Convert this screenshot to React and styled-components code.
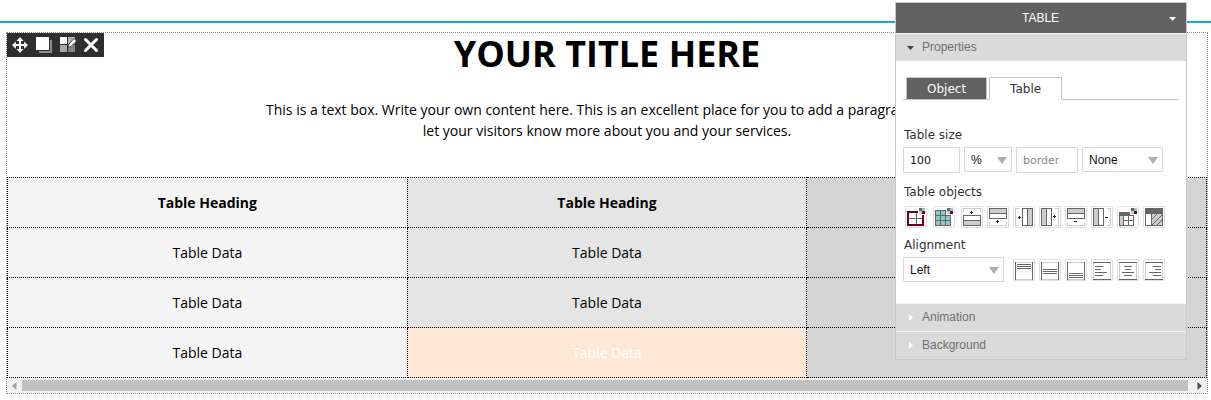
import React, { useState } from "react";
import styled, { createGlobalStyle } from "styled-components";

const GlobalStyle = createGlobalStyle`
  * {
    box-sizing: border-box;
  }
  body {
    margin: 0;
    background-color: #fff;
    color: #000;
    font-family: "Open Sans", sans-serif;
    font-size: 14px;
  }
`;

/* ---------- canvas ---------- */

const Page = styled.div`
  position: relative;
  padding: 21px 0 6px;
`;

const Guide = styled.div`
  height: 2px;
  background-color: #00b1e1;
`;

const Frame = styled.main`
  position: relative;
  margin: 9px 3px 0 6px;
  border: 1px dotted #8c8c8c;
`;

const Intro = styled.section`
  height: 144px;
  text-align: center;
`;

const Title = styled.h1`
  margin: 0;
  font-size: 36px;
  font-weight: 700;
  line-height: 42px;
`;

const Lead = styled.p`
  max-width: 690px;
  margin: 24px auto 0;
  line-height: 21px;
`;

const DataTable = styled.table`
  width: 100%;
  table-layout: fixed;
  border-collapse: collapse;
  text-align: center;
`;

const cellColors = ["#f5f5f5", "#e5e5e5", "#d4d4d4"];

const Cell = styled.td`
  height: 50px;
  padding: 0;
  border: 1px dotted #000;
  background-color: ${(props) =>
    props.$active ? "#ffe8d6" : cellColors[props.$col]};
  color: ${(props) => (props.$active ? "#fff" : "#000")};
  font-weight: ${(props) => (props.$heading ? 700 : 400)};
`;

const ScrollBar = styled.div`
  display: flex;
  height: 15px;
  background-color: #f1f1f1;
`;

const ScrollButton = styled.button`
  display: flex;
  align-items: center;
  justify-content: center;
  width: 15px;
  padding: 0;
  border: 0;
  background: none;
  color: ${(props) => (props.$off ? "#a3a3a3" : "#505050")};
`;

const Track = styled.div`
  flex: 1;
  padding: 2px 4px 2px 0;
`;

const Thumb = styled.div`
  height: 11px;
  background-color: #c1c1c1;
`;

/* ---------- object toolbar ---------- */

const Toolbar = styled.div`
  position: absolute;
  top: 0;
  left: 0;
  display: flex;
  padding-right: 1px;
  background-color: #2f2f2f;
`;

const ToolbarButton = styled.button`
  width: 24px;
  height: 24px;
  padding: 0;
  border: 0;
  background: none;

  svg {
    display: block;
  }
`;

/* ---------- inspector ---------- */

const Panel = styled.aside`
  position: absolute;
  top: 2px;
  right: 24px;
  width: 292px;
  border: 1px solid #c8c8c8;
  background-color: #fff;
  color: #333;
  font-family: "DejaVu Sans", sans-serif;
  font-size: 12px;
`;

const PanelHeader = styled.button`
  display: flex;
  align-items: center;
  width: 100%;
  height: 30px;
  padding: 0 9px;
  border: 0;
  background-color: #616161;
  color: #fff;
  font: 12px "Liberation Sans", Arial, sans-serif;

  span {
    flex: 1;
    padding-left: 8px;
  }
`;

const SectionHeader = styled.button`
  display: flex;
  align-items: center;
  gap: 7px;
  width: 100%;
  height: 28px;
  padding: 0 10px 1px;
  border: 0;
  border-top: 1px solid #f4f4f4;
  background-color: #dadada;
  color: #707070;
  font: 12px "Liberation Sans", Arial, sans-serif;
`;

const PanelBody = styled.div`
  padding: 16px 7px 19px;
`;

const Tabs = styled.div`
  display: flex;
  gap: 2px;
  padding: 0 3px;
  border-bottom: 1px solid #c8c8c8;
`;

const Tab = styled.button`
  height: 23px;
  margin-bottom: -1px;
  padding: 0 20px;
  border: 1px solid #c8c8c8;
  border-bottom-color: ${(props) => (props.$active ? "#fff" : "#c8c8c8")};
  background-color: ${(props) => (props.$active ? "#fff" : "#616161")};
  color: ${(props) => (props.$active ? "#333" : "#fff")};
  font: 12px "DejaVu Sans", sans-serif;
`;

const Groups = styled.div`
  display: flex;
  flex-direction: column;
  gap: 7px;
  margin-top: 25px;
`;

const Label = styled.label`
  display: block;
  margin-bottom: 2px;
  padding-left: 1px;
  line-height: 20px;
`;

const FieldRow = styled.div`
  display: flex;
  gap: 4px;
  padding-bottom: 2px;
`;

const TextField = styled.input`
  width: ${(props) => props.$width}px;
  height: 26px;
  padding: 0 6px;
  border: 1px solid #d6d6d6;
  border-radius: 1px;
  background-color: #fff;
  color: #111;
  font: 11px "DejaVu Sans", sans-serif;

  &::placeholder {
    color: #888;
  }
`;

const SelectBox = styled.span`
  position: relative;
  width: ${(props) => props.$width}px;

  svg {
    position: absolute;
    top: 10px;
    right: 5px;
    pointer-events: none;
  }
`;

const Select = styled.select`
  display: block;
  width: 100%;
  height: 25px;
  padding: 0 6px;
  border: 1px solid #d6d6d6;
  border-radius: 1px;
  appearance: none;
  background-color: #fff;
  color: #111;
  font: 12px "Liberation Sans", Arial, sans-serif;
`;

const IconRow = styled.div`
  display: flex;
  gap: 6px;
  padding: 2px 0 0 2px;
`;

const IconGroup = styled.div`
  display: flex;
  gap: ${(props) => (props.$wide ? 6 : 4)}px;
`;

const AlignGroup = styled(IconGroup)`
  padding: 2px 0 0 5px;
`;

const IconButton = styled.button`
  width: 22px;
  height: 22px;
  padding: 0;
  border: 0;
  border-radius: 2px;
  background-color: #fff;
  box-shadow: inset 0 0 0 1px #dedede;

  svg {
    display: block;
  }
`;

/* ---------- drawings ---------- */

const D = "#666";
const L = "#ccc";
const RED = "#720017";
const TEAL = "#8ccaca";

const Icon = ({ children }) => (
  <svg width="22" height="22" viewBox="0 0 22 22" shapeRendering="crispEdges">
    {children}
  </svg>
);

const Swatches = () => (
  <>
    <rect x="14" y="2" width="3" height="3" fill={D} />
    <rect x="17" y="2" width="3" height="3" fill={TEAL} />
    <rect x="14" y="5" width="3" height="3" fill={L} />
    <rect x="17" y="5" width="3" height="3" fill={RED} />
  </>
);

// insert / remove marks: x,y is the middle pixel
const Mark = ({ x, y, plus }) => (
  <path
    d={`M${x - 1} ${y}h3v1h-3z` + (plus ? `M${x} ${y - 1}h1v3h-1z` : "")}
    fill="#222"
  />
);

const rowTop = (
  <>
    <rect x="2.5" y="2.5" width="17" height="10" fill="#fff" stroke={D} />
    <rect x="3" y="3" width="16" height="4" fill={L} />
    <path d="M2 7.5h18" stroke={D} />
    <path d="M2.5 16v3.5h17V16" fill="none" stroke={L} />
  </>
);

const colLeft = (
  <>
    <rect x="2.5" y="2.5" width="10" height="17" fill="#fff" stroke={D} />
    <rect x="3" y="3" width="4" height="16" fill={L} />
    <path d="M7.5 2v18" stroke={D} />
    <path d="M16 2.5h3.5v17H16" fill="none" stroke={L} />
  </>
);

const colorIcons = [
  [
    "Table border",
    <>
      <path d="M11 6v12M4 12.5h14" stroke={D} />
      <path d="M13 6H3v13h15V9" fill="none" stroke={RED} strokeWidth="2" />
      <rect x="13" y="1" width="8" height="8" fill="#fff" />
      <Swatches />
    </>,
  ],
  [
    "Table fill",
    <>
      <rect x="2" y="4" width="16" height="16" fill={TEAL} />
      <path
        d="M2.5 4v16M7.5 4v16M12.5 4v16M17.5 4v16M2 4.5h16M2 9.5h16M2 14.5h16M2 19.5h16"
        stroke={D}
      />
      <rect x="13" y="1" width="8" height="8" fill="#fff" />
      <Swatches />
    </>,
  ],
];

const structureIcons = [
  [
    "Insert row above",
    <>
      <path d="M2.5 6V2.5h17V6" fill="none" stroke={L} />
      <Mark x={10} y={6} plus />
      <rect x="2.5" y="9.5" width="17" height="10" fill="#fff" stroke={D} />
      <rect x="3" y="15" width="16" height="4" fill={L} />
      <path d="M2 14.5h18" stroke={D} />
    </>,
  ],
  [
    "Insert row below",
    <>
      {rowTop}
      <Mark x={10} y={15} plus />
    </>,
  ],
  [
    "Insert column left",
    <>
      <path d="M6 2.5H2.5v17H6" fill="none" stroke={L} />
      <Mark x={6} y={11} plus />
      <rect x="9.5" y="2.5" width="10" height="17" fill="#fff" stroke={D} />
      <rect x="15" y="3" width="4" height="16" fill={L} />
      <path d="M14.5 2v18" stroke={D} />
    </>,
  ],
  [
    "Insert column right",
    <>
      {colLeft}
      <Mark x={15} y={10} plus />
    </>,
  ],
  [
    "Remove row",
    <>
      {rowTop}
      <Mark x={10} y={15} />
    </>,
  ],
  [
    "Remove column",
    <>
      {colLeft}
      <Mark x={15} y={11} />
    </>,
  ],
  [
    "Cell colors",
    <>
      <rect x="2.5" y="9.5" width="14" height="10" fill="#fff" stroke={D} />
      <rect x="3" y="10" width="3" height="9" fill={L} />
      <rect x="2" y="6" width="11" height="4" fill={D} />
      <path d="M6.5 9v11M11.5 9v11M6 14.5h11" stroke={D} />
      <Swatches />
    </>,
  ],
  [
    "Table style",
    <>
      <rect x="2.5" y="2.5" width="17" height="17" fill="#fff" stroke={D} />
      <rect x="9" y="8" width="10" height="11" fill={L} />
      <rect x="2" y="2" width="18" height="6" fill={D} />
      <path d="M8.5 8v12" stroke={D} />
      <path
        d="M9 13l5-5M9 19L19 9M14 19l5-5"
        stroke={D}
        shapeRendering="auto"
      />
    </>,
  ],
];

const VerticalIcon = ({ y }) => (
  <Icon>
    <path d="M2 3.5h18M2 20.5h18" stroke={L} />
    <path d="M2.5 3v18M19.5 3v18" stroke={D} />
    <path
      d={`M4 ${y + 0.5}h14M4 ${y + 2.5}h14M4 ${y + 4.5}h14`}
      stroke={D}
    />
  </Icon>
);

const HorizontalIcon = ({ align }) => (
  <Icon>
    <path d="M2.5 3v18M19.5 3v18" stroke={L} />
    <path d="M2 3.5h18M2 20.5h18" stroke={D} />
    {[8, 6, 12, 8].map((width, i) => {
      const x = { left: 4, center: 11 - width / 2, right: 18 - width }[align];
      return (
        <rect key={i} x={x} y={7 + i * 3} width={width} height="1" fill={D} />
      );
    })}
  </Icon>
);

const Caret = ({ color, open = true }) => (
  <svg width="9" height="9" viewBox="0 0 9 9">
    <path d={open ? "M1 3h7L4.5 7z" : "M3 1v7l4-3.5z"} fill={color} />
  </svg>
);

const DropArrow = () => (
  <svg width="10" height="7" viewBox="0 0 10 7">
    <path d="M0 0h10L5 7z" fill="#aeaeae" />
  </svg>
);

const ScrollArrow = ({ left }) => (
  <svg width="5" height="8" viewBox="0 0 5 8">
    <path d={left ? "M4.5 0v8L0 4z" : "M.5 0v8L5 4z"} fill="currentColor" />
  </svg>
);

const toolbarIcons = [
  [
    "Move",
    <path
      d="M13 4l3.5 4H14v3h3V8.5l4 3.5-4 4v-3h-3v3h2.5L13 20l-3.500-4H12v-3H9v3l-4-4 4-3.500V11h3V8H9.500z"
      fill="#fff"
    />,
  ],
  [
    "Duplicate",
    <>
      <rect x="8" y="7" width="13" height="13" fill="#8d8d8d" />
      <rect x="4" y="3" width="15" height="15" fill="#2f2f2f" />
      <rect x="5" y="4" width="13" height="13" fill="#fff" />
    </>,
  ],
  [
    "Edit style",
    <>
      <rect x="5" y="4" width="7" height="7" fill="#fff" />
      <rect x="13" y="4" width="7" height="7" fill="#b4b4b4" />
      <rect x="5" y="12" width="7" height="7" fill="#a8a8a8" />
      <rect x="13" y="12" width="7" height="7" fill="#858585" />
      <path
        d="M13 14.5l1-3.5 5-5.5L21.5 8 16 13.5z"
        fill="#fff"
        stroke="#2f2f2f"
        strokeWidth="0.8"
      />
    </>,
  ],
  [
    "Delete",
    <path
      d="M6.5 6.5l11 11M17.5 6.5l-11 11"
      stroke="#fff"
      strokeWidth="3"
      strokeLinecap="round"
    />,
  ],
];

function SelectField({ id, width, options, label }) {
  return (
    <SelectBox $width={width}>
      <Select id={id} aria-label={label} defaultValue={options[0]}>
        {options.map((option) => (
          <option key={option}>{option}</option>
        ))}
      </Select>
      <DropArrow />
    </SelectBox>
  );
}

function Tool({ name, children }) {
  return (
    <IconButton type="button" aria-label={name}>
      {children}
    </IconButton>
  );
}

function Inspector() {
  const [tab, setTab] = useState("Table");

  return (
    <Panel>
      <PanelHeader type="button">
        <span>TABLE</span>
        <Caret color="#fff" />
      </PanelHeader>
      <SectionHeader type="button" aria-expanded="true">
        <Caret color="#444" />
        Properties
      </SectionHeader>
      <PanelBody>
        <Tabs role="tablist">
          {["Object", "Table"].map((name) => (
            <Tab
              key={name}
              type="button"
              role="tab"
              aria-selected={tab === name}
              $active={tab === name}
              onClick={() => setTab(name)}
            >
              {name}
            </Tab>
          ))}
        </Tabs>
        <Groups>
          <div>
            <Label htmlFor="size">Table size</Label>
            <FieldRow>
              <TextField id="size" $width={57} defaultValue="100" />
              <SelectField label="Unit" width={48} options={["%", "px"]} />
              <TextField
                aria-label="Border width"
                $width={62}
                placeholder="border"
              />
              <SelectField
                label="Border style"
                width={81}
                options={["None", "Solid", "Dotted"]}
              />
            </FieldRow>
          </div>
          <div>
            <Label as="div">Table objects</Label>
            <IconRow>
              <IconGroup $wide>
                {colorIcons.map(([name, icon]) => (
                  <Tool key={name} name={name}>
                    <Icon>{icon}</Icon>
                  </Tool>
                ))}
              </IconGroup>
              <IconGroup>
                {structureIcons.map(([name, icon]) => (
                  <Tool key={name} name={name}>
                    <Icon>{icon}</Icon>
                  </Tool>
                ))}
              </IconGroup>
            </IconRow>
          </div>
          <div>
            <Label htmlFor="align">Alignment</Label>
            <FieldRow>
              <SelectField
                id="align"
                width={101}
                options={["Left", "Center", "Right"]}
              />
              <AlignGroup>
                {[
                  ["Top", 5],
                  ["Middle", 10],
                  ["Bottom", 14],
                ].map(([name, y]) => (
                  <Tool key={name} name={name}>
                    <VerticalIcon y={y} />
                  </Tool>
                ))}
                {["left", "center", "right"].map((align) => (
                  <Tool key={align} name={align}>
                    <HorizontalIcon align={align} />
                  </Tool>
                ))}
              </AlignGroup>
            </FieldRow>
          </div>
        </Groups>
      </PanelBody>
      {["Animation", "Background"].map((name) => (
        <SectionHeader key={name} type="button" aria-expanded="false">
          <Caret color="#fff" open={false} />
          {name}
        </SectionHeader>
      ))}
    </Panel>
  );
}

function App() {
  return (
    <>
      <GlobalStyle />
      <Page>
        <Guide />
        <Frame>
          <Intro>
            <Title>YOUR TITLE HERE</Title>
            <Lead>
              This is a text box. Write your own content here. This is an
              excellent place for you to add a paragraph and&nbsp; let your
              visitors know more about you and your services.
            </Lead>
          </Intro>
          <DataTable>
            <thead>
              <tr>
                {[0, 1, 2].map((col) => (
                  <Cell as="th" key={col} $col={col} $heading>
                    Table Heading
                  </Cell>
                ))}
              </tr>
            </thead>
            <tbody>
              {[0, 1, 2].map((row) => (
                <tr key={row}>
                  {[0, 1, 2].map((col) => (
                    <Cell key={col} $col={col} $active={row === 2 && col === 1}>
                      Table Data
                    </Cell>
                  ))}
                </tr>
              ))}
            </tbody>
          </DataTable>
          <ScrollBar>
            <ScrollButton type="button" aria-label="Scroll left" $off>
              <ScrollArrow left />
            </ScrollButton>
            <Track>
              <Thumb />
            </Track>
            <ScrollButton type="button" aria-label="Scroll right">
              <ScrollArrow />
            </ScrollButton>
          </ScrollBar>
          <Toolbar>
            {toolbarIcons.map(([name, icon]) => (
              <ToolbarButton key={name} type="button" aria-label={name}>
                <svg width="24" height="24" viewBox="0 0 24 24">
                  {icon}
                </svg>
              </ToolbarButton>
            ))}
          </Toolbar>
        </Frame>
        <Inspector />
      </Page>
    </>
  );
}

export default App;
